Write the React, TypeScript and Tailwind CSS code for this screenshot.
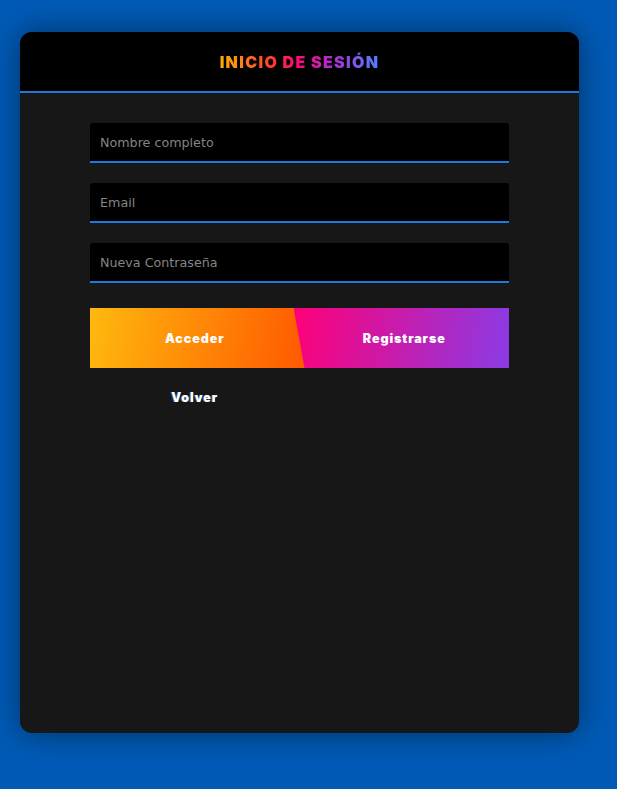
import React from "react";

export default function App() {
  const body = { fontFamily: '"DejaVu Sans", "Noto Sans", sans-serif' };
  const heavy = { fontFamily: 'Inter, "DejaVu Sans", sans-serif' };
  return (
    <div className="min-h-screen w-full bg-[#005ab5] pt-8 pl-5" style={body}>
      <div className="w-[559px] h-[701px] rounded-xl bg-[#171717] overflow-hidden shadow-[0_0_30px_rgba(0,0,0,0.45)]">
        <div className="h-[59px] bg-black flex items-center justify-center pt-[1px]">
          <h1
            style={heavy}
            className="text-[16px] font-black uppercase tracking-[1.3px] bg-[linear-gradient(90deg,#ffb000_0%,#ff3a30_33%,#ff0a70_48%,#b02ccf_70%,#4f80ff_100%)] bg-clip-text text-transparent"
          >
            Inicio de sesión
          </h1>
        </div>
        <div className="h-[2px] bg-[#1f78e0]" />
        <div className="px-[70px] pt-[30px] flex flex-col">
          <div className="flex flex-col gap-5">
            {["Nombre completo", "Email", "Nueva Contraseña"].map((p) => (
              <input
                key={p}
                placeholder={p}
                className="h-10 w-full bg-black rounded-t-[3px] border-b-2 border-b-[#1f78e0] pl-[10px] text-[12.7px] text-white placeholder:text-[#858585] outline-none"
              />
            ))}
          </div>
          <div className="mt-[25px] h-[60px] flex" style={heavy}>
            <button className="w-[calc(50%+6px)] pr-[6px] h-full pt-[2px] bg-[linear-gradient(100deg,#ffb90d,#ff5800)] text-white text-[12.5px] font-black tracking-[0.9px]">
              Acceder
            </button>
            <button className="w-[calc(50%+6px)] -ml-[12px] pl-[6px] pt-[2px] h-full bg-[linear-gradient(100deg,#ff0077,#8a3be6)] text-white text-[12.5px] font-black tracking-[0.9px] [clip-path:polygon(0_0,100%_0,100%_100%,11px_100%)]">
              Registrarse
            </button>
          </div>
          <div className="flex" style={heavy}>
            <button className="w-1/2 h-[40px] mt-[10px] pt-[1px] text-white text-[12.5px] font-black tracking-[0.9px] [text-shadow:-1px_0_0_rgba(80,160,255,0.5)]">
              Volver
            </button>
          </div>
        </div>
      </div>
    </div>
  );
}
